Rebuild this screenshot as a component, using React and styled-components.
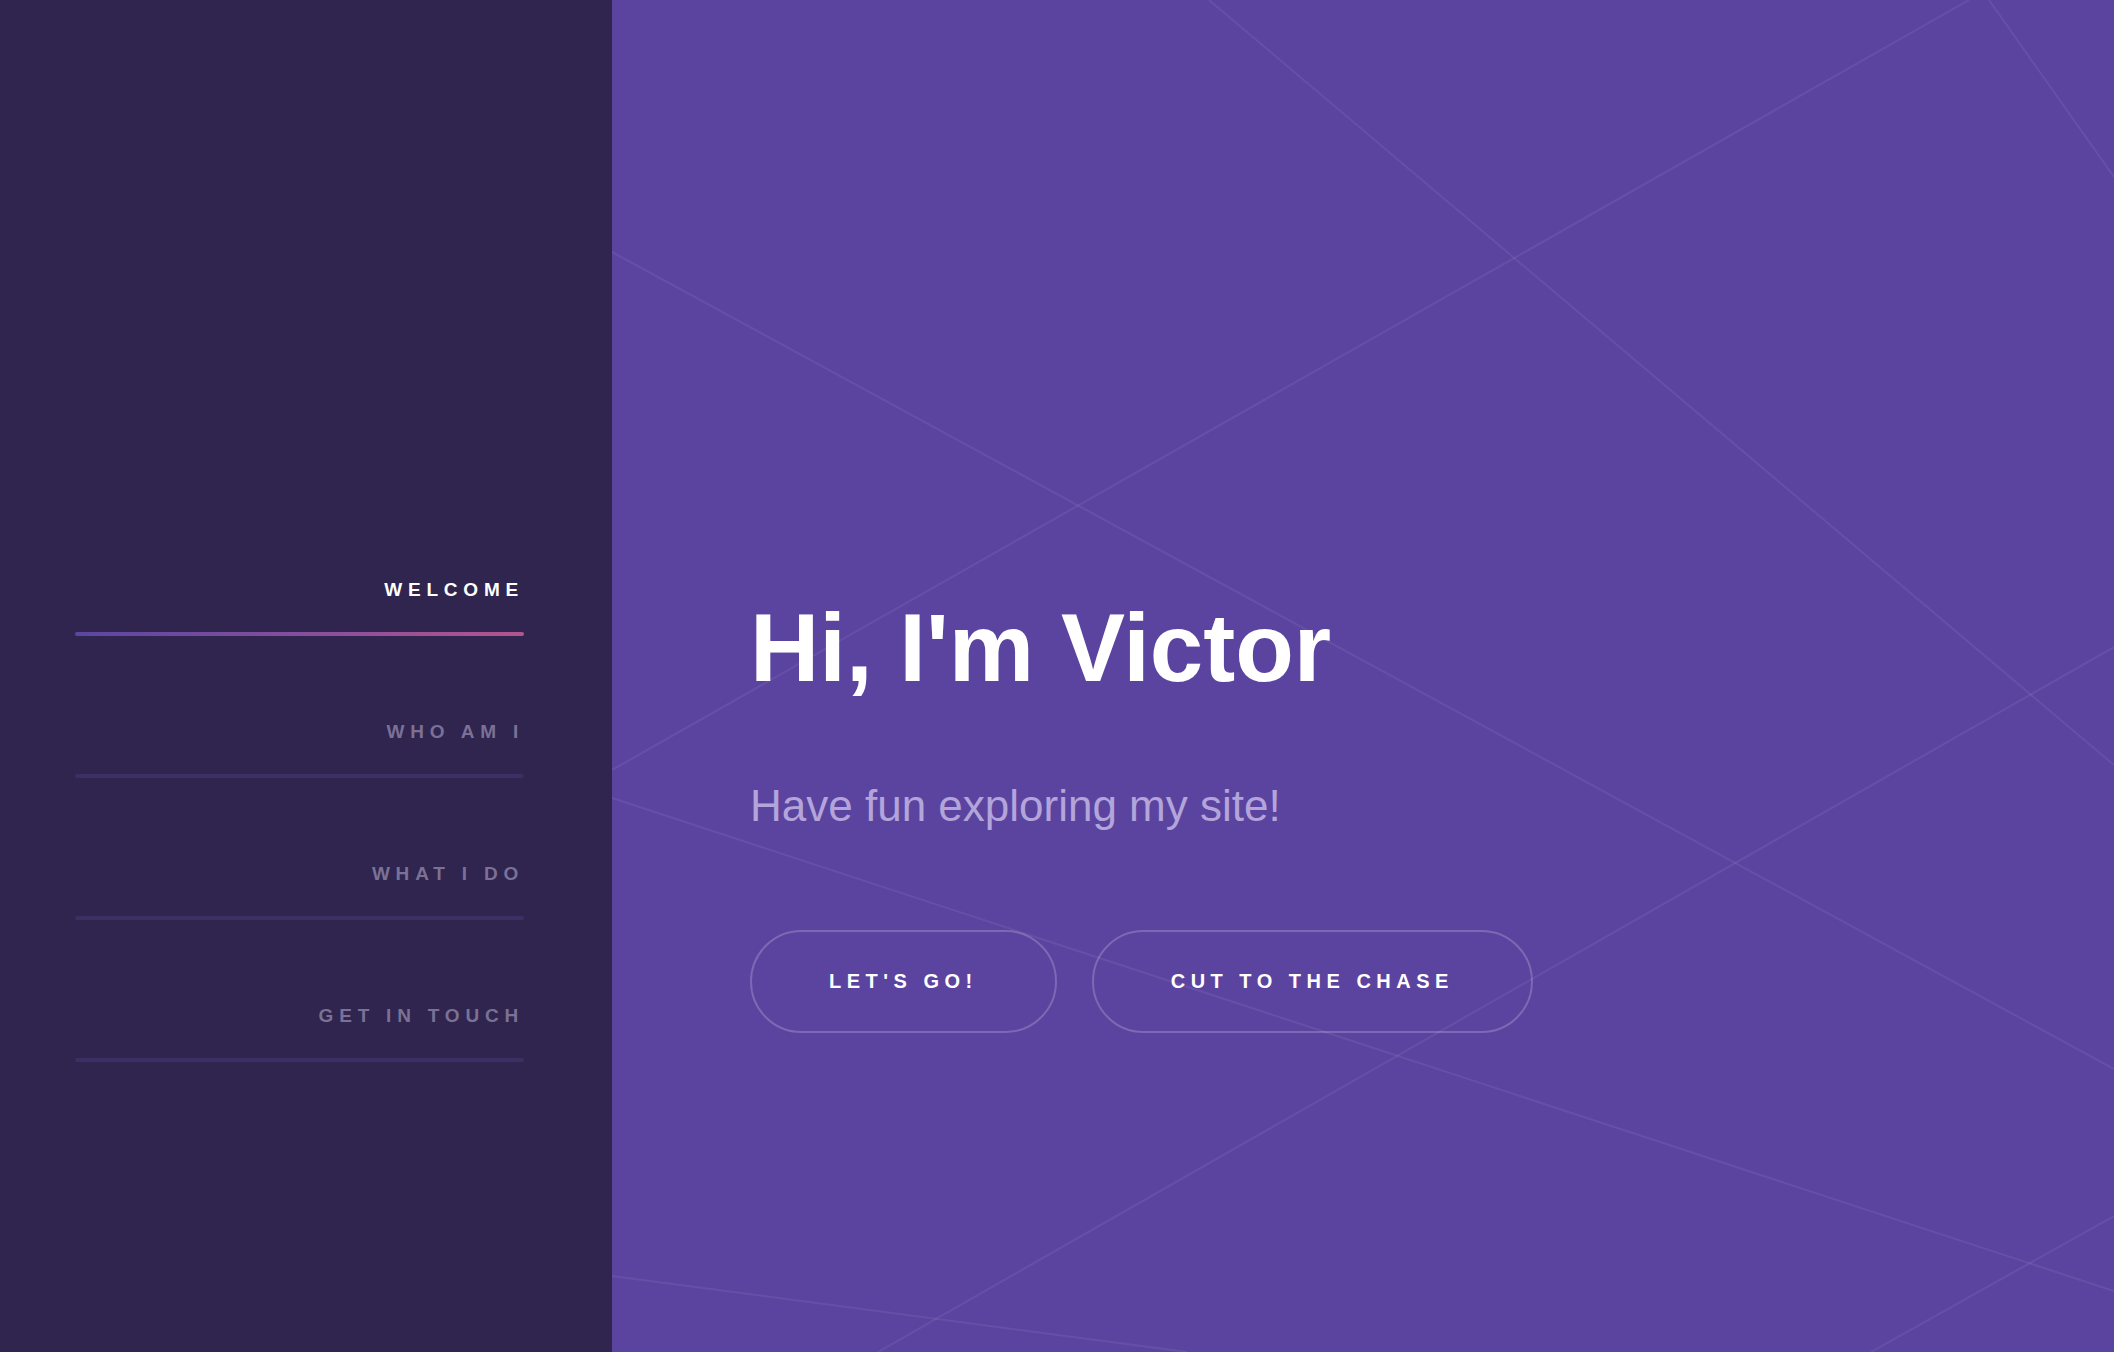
import React from "react"
import styled, { createGlobalStyle } from "styled-components"

const GlobalStyle = createGlobalStyle`
    html, body {
        margin: 0;
        padding: 0;
        height: 100%;
    }
    body {
        font-family: "Liberation Sans", Arial, Helvetica, sans-serif;
        background: #2f254e;
    }
    * {
        box-sizing: border-box;
    }
`

const Page = styled.div`
    display: flex;
    width: 100%;
    height: 100vh;
    overflow: hidden;
`

const Sidebar = styled.aside`
    width: 612px;
    flex-shrink: 0;
    background-color: #2f254e;
    padding: 580px 88px 0 75px;
`

const Nav = styled.nav`
    display: flex;
    flex-direction: column;
`

const NavItem = styled.a`
    display: flex;
    flex-direction: column;
    align-items: flex-end;
    height: 142px;
    text-decoration: none;
    cursor: pointer;
`

const NavLabel = styled.span`
    font-size: 19px;
    line-height: 20px;
    font-weight: 700;
    letter-spacing: 5.8px;
    text-transform: uppercase;
    color: ${(p) => (p.active ? "#ffffff" : "#7b7196")};
`

const NavLine = styled.span`
    display: block;
    width: 100%;
    height: 4px;
    margin-top: 32px;
    border-radius: 2px;
    background: ${(p) =>
        p.active
            ? "linear-gradient(90deg, #5b46a2 0%, #8a4f9c 55%, #b4548e 100%)"
            : "#3b2f63"};
`

const Main = styled.main`
    position: relative;
    flex: 1;
    background-color: #5b44a0;
    overflow: hidden;
`

const Lines = styled.svg`
    position: absolute;
    inset: 0;
    width: 100%;
    height: 100%;
    pointer-events: none;
`

const Content = styled.div`
    position: relative;
    padding: 600px 0 0 138px;
`

const Title = styled.h1`
    margin: 0;
    font-size: 96px;
    line-height: 1;
    font-weight: 700;
    color: #ffffff;
`

const Subtitle = styled.p`
    margin: 88px 0 0;
    font-size: 44px;
    line-height: 1;
    color: #b3a5da;
`

const Actions = styled.div`
    display: flex;
    gap: 35px;
    margin-top: 102px;
`

const PillButton = styled.button`
    height: 103px;
    padding: 0 77px;
    border: 2px solid rgba(255, 255, 255, 0.2);
    border-radius: 52px;
    background: transparent;
    color: #ffffff;
    font-family: "Liberation Sans", Arial, sans-serif;
    font-size: 20px;
    font-weight: 700;
    letter-spacing: 5.5px;
    text-transform: uppercase;
    cursor: pointer;
`

const navItems = ["Welcome", "Who am I", "What I do", "Get in touch"]

const bgLines = [
    [597, 0, 1502, 765],
    [1357, 0, 0, 770],
    [1377, 0, 1502, 177],
    [0, 252, 1502, 1069],
    [1502, 647, 266, 1352],
    [0, 798, 1502, 1291],
    [0, 1276, 575, 1352],
    [1502, 1216, 1259, 1352],
]

export default function App() {
    return (
        <>
            <GlobalStyle />
            <Page>
                <Sidebar>
                    <Nav>
                        {navItems.map((label, i) => (
                            <NavItem key={label}>
                                <NavLabel active={i === 0}>{label}</NavLabel>
                                <NavLine active={i === 0} />
                            </NavItem>
                        ))}
                    </Nav>
                </Sidebar>
                <Main>
                    <Lines viewBox="0 0 1502 1352" preserveAspectRatio="none">
                        {bgLines.map(([x1, y1, x2, y2], i) => (
                            <line
                                key={i}
                                x1={x1}
                                y1={y1}
                                x2={x2}
                                y2={y2}
                                stroke="rgba(255,255,255,0.065)"
                                strokeWidth="2"
                            />
                        ))}
                    </Lines>
                    <Content>
                        <Title>Hi, I'm Victor</Title>
                        <Subtitle>Have fun exploring my site!</Subtitle>
                        <Actions>
                            <PillButton>Let's go!</PillButton>
                            <PillButton>Cut to the chase</PillButton>
                        </Actions>
                    </Content>
                </Main>
            </Page>
        </>
    )
}
